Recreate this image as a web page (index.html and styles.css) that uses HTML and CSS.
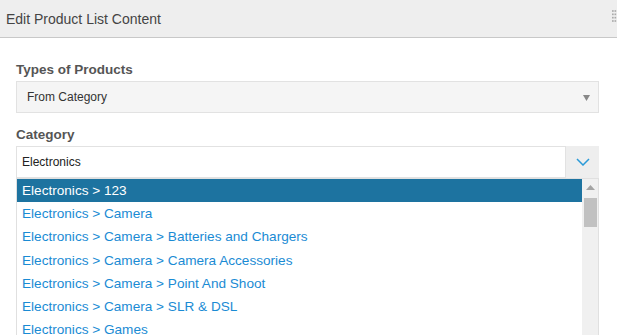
FILE: index.html
```html
<!DOCTYPE html>
<html>
<head>
<meta charset="utf-8">
<link rel="stylesheet" href="styles.css">
</head>
<body>
<div class="panel">
  <div class="header">
    <span class="title">Edit Product List Content</span>
    <svg class="grip" width="6" height="14" viewBox="0 0 6 14">
      <g fill="#aaa">
        <rect x="0" y="0" width="2" height="2"/><rect x="3" y="0" width="2" height="2"/>
        <rect x="0" y="4" width="2" height="2"/><rect x="3" y="4" width="2" height="2"/>
        <rect x="0" y="8" width="2" height="2"/><rect x="3" y="8" width="2" height="2"/>
        <rect x="0" y="12" width="2" height="2"/><rect x="3" y="12" width="2" height="2"/>
      </g>
    </svg>
  </div>
  <div class="body">
    <div class="label">Types of Products</div>
    <div class="select">
      <span>From Category</span>
      <svg class="tri" width="7" height="6" viewBox="0 0 7 6"><path d="M0 0H7L3.5 6Z" fill="#888"/></svg>
    </div>
    <div class="label label2">Category</div>
    <div class="combo">
      <div class="input">Electronics</div>
      <div class="btn">
        <svg width="14" height="8" viewBox="0 0 14 8"><path d="M1 1L7 7L13 1" fill="none" stroke="#2a9ad8" stroke-width="1.5"/></svg>
      </div>
    </div>
    <div class="list">
      <ul class="items">
        <li class="active">Electronics &gt; 123</li>
        <li>Electronics &gt; Camera</li>
        <li>Electronics &gt; Camera &gt; Batteries and Chargers</li>
        <li>Electronics &gt; Camera &gt; Camera Accessories</li>
        <li>Electronics &gt; Camera &gt; Point And Shoot</li>
        <li>Electronics &gt; Camera &gt; SLR &amp; DSL</li>
        <li>Electronics &gt; Games</li>
      </ul>
      <div class="scrollbar">
        <svg class="up" width="9" height="5" viewBox="0 0 9 5"><path d="M0 5L4.5 0L9 5Z" fill="#a3a3a3"/></svg>
        <div class="thumb"></div>
      </div>
    </div>
  </div>
</div>
</body>
</html>
```
FILE: styles.css
```css
html, body {
  margin: 0;
  padding: 0;
  background: #fff;
  font-family: "Liberation Sans", Arial, sans-serif;
}
.panel {
  width: 617px;
  height: 335px;
  overflow: hidden;
}
.header {
  height: 37px;
  background: #eeeeee;
  border-bottom: 1px solid #c8c8c8;
  display: flex;
  align-items: center;
  justify-content: space-between;
  padding-left: 6px;
}
.title {
  font-size: 14px;
  color: #444;
}
.grip {
  margin-top: -6px;
  margin-right: 0;
  flex: none;
  width: 5px;
}
.body {
  padding: 24px 18px 0 16px;
}
.label {
  font-size: 13.5px;
  font-weight: bold;
  color: #555;
  line-height: 16px;
  height: 19px;
}
.label2 {
  margin-top: 14px;
}
.select {
  height: 30px;
  border: 1px solid #e2e2e2;
  background: #f5f5f5;
  display: flex;
  align-items: center;
  justify-content: space-between;
  padding: 0 8px 0 10px;
  font-size: 12px;
  color: #333;
}
.tri {
  margin-top: 1px;
}
.combo {
  display: flex;
  height: 32px;
}
.input {
  flex: 1;
  border: 1px solid #e2e2e2;
  background: #fff;
  font-size: 12px;
  color: #222;
  display: flex;
  align-items: center;
  padding-left: 5px;
}
.btn {
  width: 33px;
  background: #eeeeee;
  display: flex;
  align-items: center;
  justify-content: center;
}
.btn svg {
  margin-top: -1px;
}
.list {
  display: flex;
  border-left: 1px solid #e0e0e0;
  border-right: 1px solid #e0e0e0;
  border-top: 1px solid #e0e0e0;
  height: 160px;
}
.items {
  list-style: none;
  margin: 0;
  padding: 0;
  flex: 1;
}
.items li {
  height: 23.2px;
  line-height: 23px;
  font-size: 13.6px;
  color: #1a8bd4;
  padding-left: 5px;
  white-space: nowrap;
}
.items li.active {
  background: #1d73a0;
  color: #fff;
}
.scrollbar {
  width: 16px;
  background: #f0f0f0;
  display: flex;
  flex-direction: column;
  align-items: center;
}
.up {
  margin-top: 6px;
  margin-left: 1px;
}
.thumb {
  margin-top: 8px;
  width: 13px;
  height: 29px;
  background: #c1c1c1;
  margin-left: 1px;
}
```
